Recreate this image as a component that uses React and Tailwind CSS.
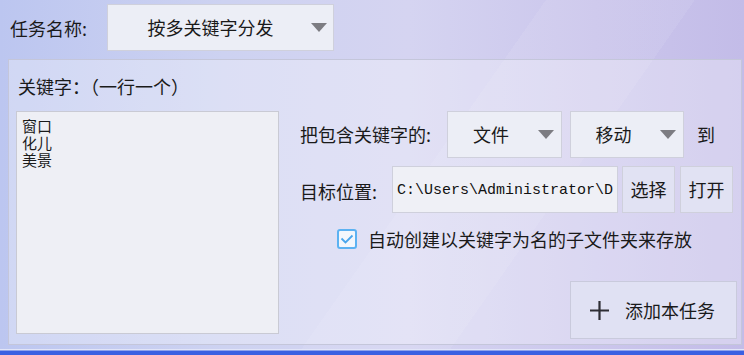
import React from "react";

const cjk = { fontFamily: '"Noto Sans CJK SC", "Microsoft YaHei", sans-serif' };

function Arrow() {
  return (
    <svg width="16" height="9" viewBox="0 0 16 9" className="shrink-0">
      <polygon points="0,0 16,0 8,9" fill="#7c7c82" />
    </svg>
  );
}

function Combo({ text, w, arrowPad }) {
  return (
    <div
      className="flex items-center h-[47px] border border-[#cfd0dc] bg-[#eceef6] shrink-0"
      style={{ width: w }}
    >
      <div className="flex-1 text-center text-[18px] text-[#1a1a1a]">{text}</div>
      <div className="flex items-center" style={{ paddingRight: arrowPad, paddingLeft: 4 }}>
        <Arrow />
      </div>
    </div>
  );
}

export default function App() {
  return (
    <div
      className="relative w-[744px] h-[355px] overflow-hidden text-[#1a1a1a]"
      style={cjk}
    >
      <div className="absolute inset-0 bg-[linear-gradient(90deg,#bcc6f0_0%,#cdd2f1_30%,#d5d4f1_55%,#cbc6ec_80%,#c3bce8_100%)]" />
      <div className="absolute inset-0 bg-[linear-gradient(125deg,rgba(255,255,255,0)_0%,rgba(255,255,255,0)_55%,rgba(255,255,255,0.08)_55%,rgba(255,255,255,0.08)_70%,rgba(255,255,255,0)_70%)]" />
      <div className="relative flex flex-col h-full">
        {/* top row */}
        <div className="flex items-center pt-[4px]">
          <div className="w-[107px] pl-[10px] text-[18px] leading-[24px] shrink-0">任务名称:</div>
          <div className="flex items-center w-[227px] h-[47px] border border-[#cfd0dc] bg-[#eceef6]">
            <div className="flex-1 text-center text-[18px] pl-[6px]">按多关键字分发</div>
            <div className="pr-[6px] pl-[4px] flex items-center">
              <Arrow />
            </div>
          </div>
        </div>

        {/* panel */}
        <div className="ml-[8px] mt-[8px] w-[734px] h-[286px] border border-[#c4c6da] bg-white/30 flex flex-col pl-[7px]">
          <div className="mt-[14px] h-[24px] leading-[24px] text-[18px] pl-[2px]">关键字：（一行一个）</div>
          <div className="flex mt-[13px]">
            <div className="w-[263px] h-[223px] border border-[#c9cad4] bg-[#eeeff5] pl-[5px] pt-[5px] text-[15px] leading-[17px] shrink-0">
              <div>窗口</div>
              <div>化儿</div>
              <div>美景</div>
            </div>
            <div className="ml-[21px] w-[441px] flex flex-col">
              <div className="flex items-center h-[47px]">
                <div className="w-[147px] text-[18px] shrink-0">把包含关键字的:</div>
                <Combo text="文件" w={115} arrowPad={7} />
                <div className="ml-[8px]">
                  <Combo text="移动" w={114} arrowPad={7} />
                </div>
                <div className="ml-[13px] text-[18px]">到</div>
              </div>
              <div className="flex items-center h-[47px] mt-[8px]">
                <div className="w-[92px] text-[18px] shrink-0 pt-[3px]">目标位置:</div>
                <div
                  className="w-[226px] h-[47px] border border-[#cfd0dc] bg-[#eff0f6] flex items-center pl-[4px] pt-[4px] overflow-hidden whitespace-nowrap text-[15px] text-[#111]"
                  style={{ fontFamily: '"Liberation Mono", "DejaVu Sans Mono", monospace' }}
                >
                  C:\Users\Administrator\D
                </div>
                <div className="ml-[4px] w-[53px] h-[47px] border border-[#cfd0dc] bg-[#e1e2f3] flex items-center justify-center text-[18px]">选择</div>
                <div className="ml-[5px] w-[53px] h-[47px] border border-[#cfd0dc] bg-[#e1e2f3] flex items-center justify-center text-[18px]">打开</div>
              </div>
              <div className="flex items-center h-[22px] mt-[15px]">
                <div className="ml-[37px] w-[20px] h-[20px] rounded-[3px] border-2 border-[#5cb2f2] bg-[#f3f7fc] flex items-center justify-center shrink-0">
                  <svg width="14" height="10" viewBox="0 0 14 10">
                    <polyline points="1.5,4.5 5.5,8.5 12.5,1.5" fill="none" stroke="#4aa6ec" strokeWidth="1.8" />
                  </svg>
                </div>
                <div className="ml-[11px] text-[18px] whitespace-nowrap">自动创建以关键字为名的子文件夹来存放</div>
              </div>
              <div className="mt-[31px] ml-[270px] w-[167px] h-[58px] border border-[#c9cadc] bg-[#e0e1f3] flex items-center">
                <svg width="19" height="19" viewBox="0 0 19 19" className="ml-[19px] shrink-0">
                  <path d="M9.5 0V19M0 9.5H19" stroke="#2e2e34" strokeWidth="2.2" />
                </svg>
                <div className="ml-[16px] text-[18px]">添加本任务</div>
              </div>
            </div>
          </div>
        </div>

        {/* bottom strip */}
        <div className="flex-1 flex flex-col justify-end">
          <div className="h-[1px] bg-[#e2e5f8]" />
          <div className="h-[1px] bg-[#8fa3ec]" />
          <div className="h-[4px] bg-[#3a60e2]" />
        </div>
      </div>
    </div>
  );
}
